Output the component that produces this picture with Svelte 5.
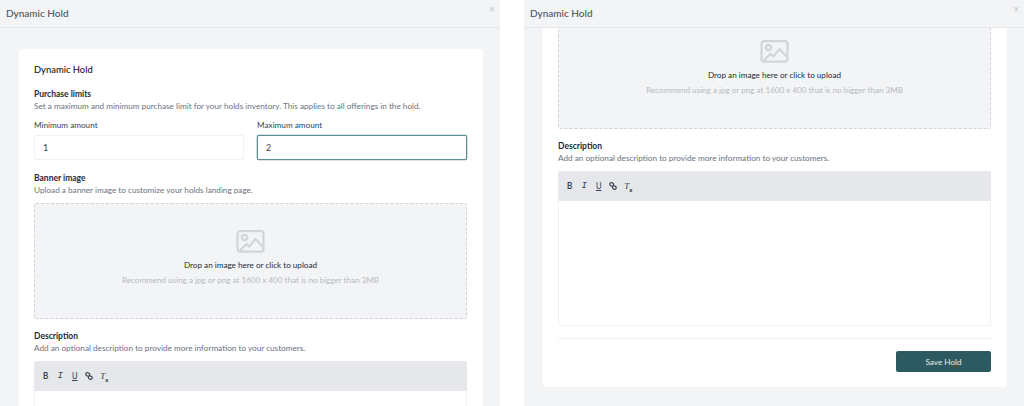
<script>
  let minAmount = $state("1");
  let maxAmount = $state("2");
  const tools = ["b", "i", "u", "link", "clear"];
</script>

{#snippet dropzone(cut)}
  <div class="drop" class:cut>
    <svg class="pic" width="29" height="23" viewBox="0 0 29 23" fill="none" stroke="#d1d5db" stroke-width="2.2">
      <rect x="1.5" y="1.2" width="26" height="20.500" rx="2.5" />
      <circle cx="8.5" cy="7.500" r="2.6" />
      <path d="M4 20.500l6.500-6.500 3 2.500 6-7.500 7.500 8" />
    </svg>
    <p class="drop-main">Drop an image here or click to upload</p>
    <p class="drop-hint">Recommend using a jpg or png at 1600 x 400 that is no bigger than 3MB</p>
  </div>
{/snippet}

{#snippet description()}
  <div class="group">
    <h3>Description</h3>
    <p class="help">Add an optional description to provide more information to your customers.</p>
  </div>
{/snippet}

{#snippet toolbar()}
  <div class="toolbar">
    {#each tools as t}
      <span class="tool">
        {#if t === "b"}<b>B</b>
        {:else if t === "i"}<i>I</i>
        {:else if t === "u"}<u>U</u>
        {:else if t === "link"}
          <svg width="8" height="8" viewBox="0 0 9 9" fill="none" stroke="#374151" stroke-width="1.300">
            <rect x="0.800" y="1" width="4.500" height="3.400" rx="1.700" transform="rotate(30 3 2.700)" />
            <rect x="3.700" y="4.600" width="4.500" height="3.400" rx="1.700" transform="rotate(30 6 6.300)" />
          </svg>
        {:else}<i class="clear">T<sub>x</sub></i>
        {/if}
      </span>
    {/each}
  </div>
{/snippet}

<div class="page">
  <section class="panel">
    <header>
      <span>Dynamic Hold</span>
      <button class="close" type="button">×</button>
    </header>
    <div class="body">
      <div class="card">
        <h2>Dynamic Hold</h2>
        <div class="group">
          <h3>Purchase limits</h3>
          <p class="help">Set a maximum and minimum purchase limit for your holds inventory. This applies to all offerings in the hold.</p>
        </div>
        <div class="amounts">
          <label>
            <span>Minimum amount</span>
            <input type="text" bind:value={minAmount} />
          </label>
          <label>
            <span>Maximum amount</span>
            <input class="focused" type="text" bind:value={maxAmount} />
          </label>
        </div>
        <div class="group banner">
          <h3>Banner image</h3>
          <p class="help">Upload a banner image to customize your holds landing page.</p>
        </div>
        {@render dropzone(false)}
        {@render description()}
        <div class="editor">
          {@render toolbar()}
          <div class="area"></div>
        </div>
      </div>
    </div>
  </section>

  <section class="panel">
    <header>
      <span>Dynamic Hold</span>
      <button class="close" type="button">×</button>
    </header>
    <div class="body scrolled">
      <div class="card">
        {@render dropzone(true)}
        {@render description()}
        <div class="editor">
          {@render toolbar()}
          <div class="area"></div>
        </div>
        <div class="actions">
          <button class="save" type="button">Save Hold</button>
        </div>
      </div>
    </div>
  </section>
</div>

<style>
  :global(body) {
    background: #fff;
    font-family: Lato, "Liberation Sans", sans-serif;
  }
  .page {
    display: flex;
    gap: 24px;
    height: 406px;
    overflow: hidden;
  }
  .panel {
    width: 500px;
    height: 406px;
    background: #f3f4f6;
    display: flex;
    flex-direction: column;
    overflow: hidden;
  }
  header {
    flex: none;
    height: 28px;
    box-sizing: border-box;
    border-bottom: 1px solid #e5e7eb;
    display: flex;
    justify-content: space-between;
    padding: 7px 5px 0 6px;
    font-size: 10px;
    line-height: 12px;
    font-weight: 500;
    color: #4b5563;
  }
  .close {
    border: 0;
    background: none;
    padding: 0;
    margin-top: -2px;
    height: 10px;
    font-size: 10px;
    line-height: 10px;
    color: #c4c7cd;
  }
  .body {
    flex: 1;
    overflow: hidden;
    padding: 21px 17px 0 19px;
  }
  .body.scrolled {
    padding-top: 0;
  }
  .card {
    background: #fff;
    border-radius: 4px;
    padding: 15px 16px 16px 15px;
  }
  .scrolled .card {
    padding-top: 0;
    padding-bottom: 15px;
    border-radius: 0 0 4px 4px;
  }
  h2 {
    margin: 0 0 12px;
    font-size: 9.400px;
    line-height: 12px;
    font-weight: 500;
    color: #111827;
  }
  h3 {
    margin: 0;
    font-size: 8.500px;
    line-height: 12px;
    font-weight: 700;
    color: #1f2937;
  }
  .help {
    margin: 0;
    font-size: 8.200px;
    line-height: 12px;
    color: #6b7280;
  }
  .amounts {
    display: grid;
    grid-template-columns: 210px 210px;
    gap: 13px;
    margin-top: 7px;
  }
  label span {
    display: block;
    font-size: 8.200px;
    line-height: 12px;
    color: #374151;
    margin-bottom: 4px;
  }
  input {
    display: block;
    width: 100%;
    height: 25px;
    box-sizing: border-box;
    border: 1px solid #f0f1f3;
    border-radius: 2px;
    padding: 0 8px;
    font: 9px Lato, sans-serif;
    color: #374151;
    outline: none;
  }
  input.focused {
    border-color: #5f8f95;
    box-shadow: 0 0 0 0.300px #5f8f95;
    width: 210px;
  }
  .banner {
    margin-top: 12px;
    margin-bottom: 7px;
  }
  .drop {
    height: 116px;
    box-sizing: border-box;
    border: 1px dashed #d1d5db;
    border-radius: 2px;
    background: #f3f4f6;
    display: flex;
    flex-direction: column;
    align-items: center;
    padding-top: 26px;
    margin-bottom: 11px;
  }
  .drop.cut {
    margin-top: -15px;
  }
  .pic {
    display: block;
  }
  .drop p {
    margin: 0;
    line-height: 12px;
  }
  .drop-main {
    color: #1f2937;
    font-size: 8.150px;
    padding-top: 6px;
  }
  .drop-hint {
    color: #b6bac1;
    font-size: 8.100px;
    padding-top: 3px;
  }
  .editor {
    margin-top: 7px;
    border-radius: 2px;
    overflow: hidden;
  }
  .toolbar {
    height: 30px;
    background: #e5e7eb;
    display: flex;
    align-items: center;
    padding-left: 6px;
    gap: 3px;
  }
  .tool {
    width: 11.500px;
    display: flex;
    justify-content: center;
    align-items: center;
    font-size: 8.500px;
    font-family: Roboto, sans-serif;
    color: #374151;
  }
  .tool b {
    font-weight: 500;
    font-size: 8.500px;
  }
  .tool i:not(.clear) {
    font-family: "Liberation Mono", monospace;
    font-size: 9px;
  }
  .clear {
    font-family: "Liberation Serif", serif;
    font-size: 9px;
    margin-left: 1px;
  }
  .clear sub {
    font-size: 6px;
    font-family: Roboto, sans-serif;
    font-style: normal;
    font-weight: 700;
    line-height: 0;
  }
  .area {
    height: 125px;
    box-sizing: border-box;
    border: 1px solid #f0f1f3;
    border-top: 0;
    border-radius: 0 0 2px 2px;
    background: #fff;
  }
  .actions {
    margin-top: 12px;
    border-top: 1px solid #eceef0;
    padding-top: 12px;
    display: flex;
    justify-content: flex-end;
  }
  .save {
    width: 95px;
    height: 21px;
    border: 0;
    border-radius: 2px;
    background: #2d5a60;
    color: #e5efef;
    font: 8.200px Lato, sans-serif;
  }
</style>
